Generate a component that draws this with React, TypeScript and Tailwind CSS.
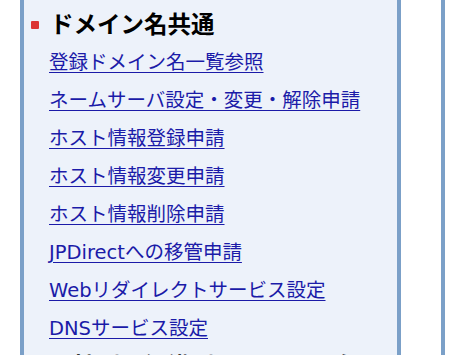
import React from 'react';

const links = [
  '登録ドメイン名一覧参照',
  'ネームサーバ設定・変更・解除申請',
  'ホスト情報登録申請',
  'ホスト情報変更申請',
  'ホスト情報削除申請',
  'JPDirectへの移管申請',
  'Webリダイレクトサービス設定',
  'DNSサービス設定',
];

function Heading({ children }: { children: React.ReactNode }) {
  return (
    <h2 className="flex items-center text-[23.5px] font-bold leading-[38px] text-black">
      <span className="ml-[7px] mr-[11px] h-[8px] w-[8px] shrink-0 rounded-[1px] bg-[#dc3535]" />
      {children}
    </h2>
  );
}

export default function App() {
  return (
    <div
      className="flex h-[355px] w-[461px] overflow-hidden bg-white"
      style={{ fontFamily: '"DejaVu Sans", "Noto Sans CJK JP", sans-serif' }}
    >
      {/* Menu panel */}
      <div className="ml-[20px] w-[381px] shrink-0 border-x-4 border-[#7ba0c8] bg-[#edf2fa]">
        <div className="pt-[6px]">
          <Heading>ドメイン名共通</Heading>
          <ul>
            {links.map((label) => (
              <li key={label} className="pl-[25px] text-[19.5px] leading-[38px]">
                <a href="#" className="text-[#1b1ba8] underline underline-offset-[3px]">
                  {label}
                </a>
              </li>
            ))}
          </ul>
          <Heading>属性型・組織型JPドメイン名</Heading>
        </div>
      </div>

      {/* Right column */}
      <div className="ml-[40px] h-full w-[20px] shrink-0 border-l-4 border-[#7ba0c8] bg-white" />
    </div>
  );
}
